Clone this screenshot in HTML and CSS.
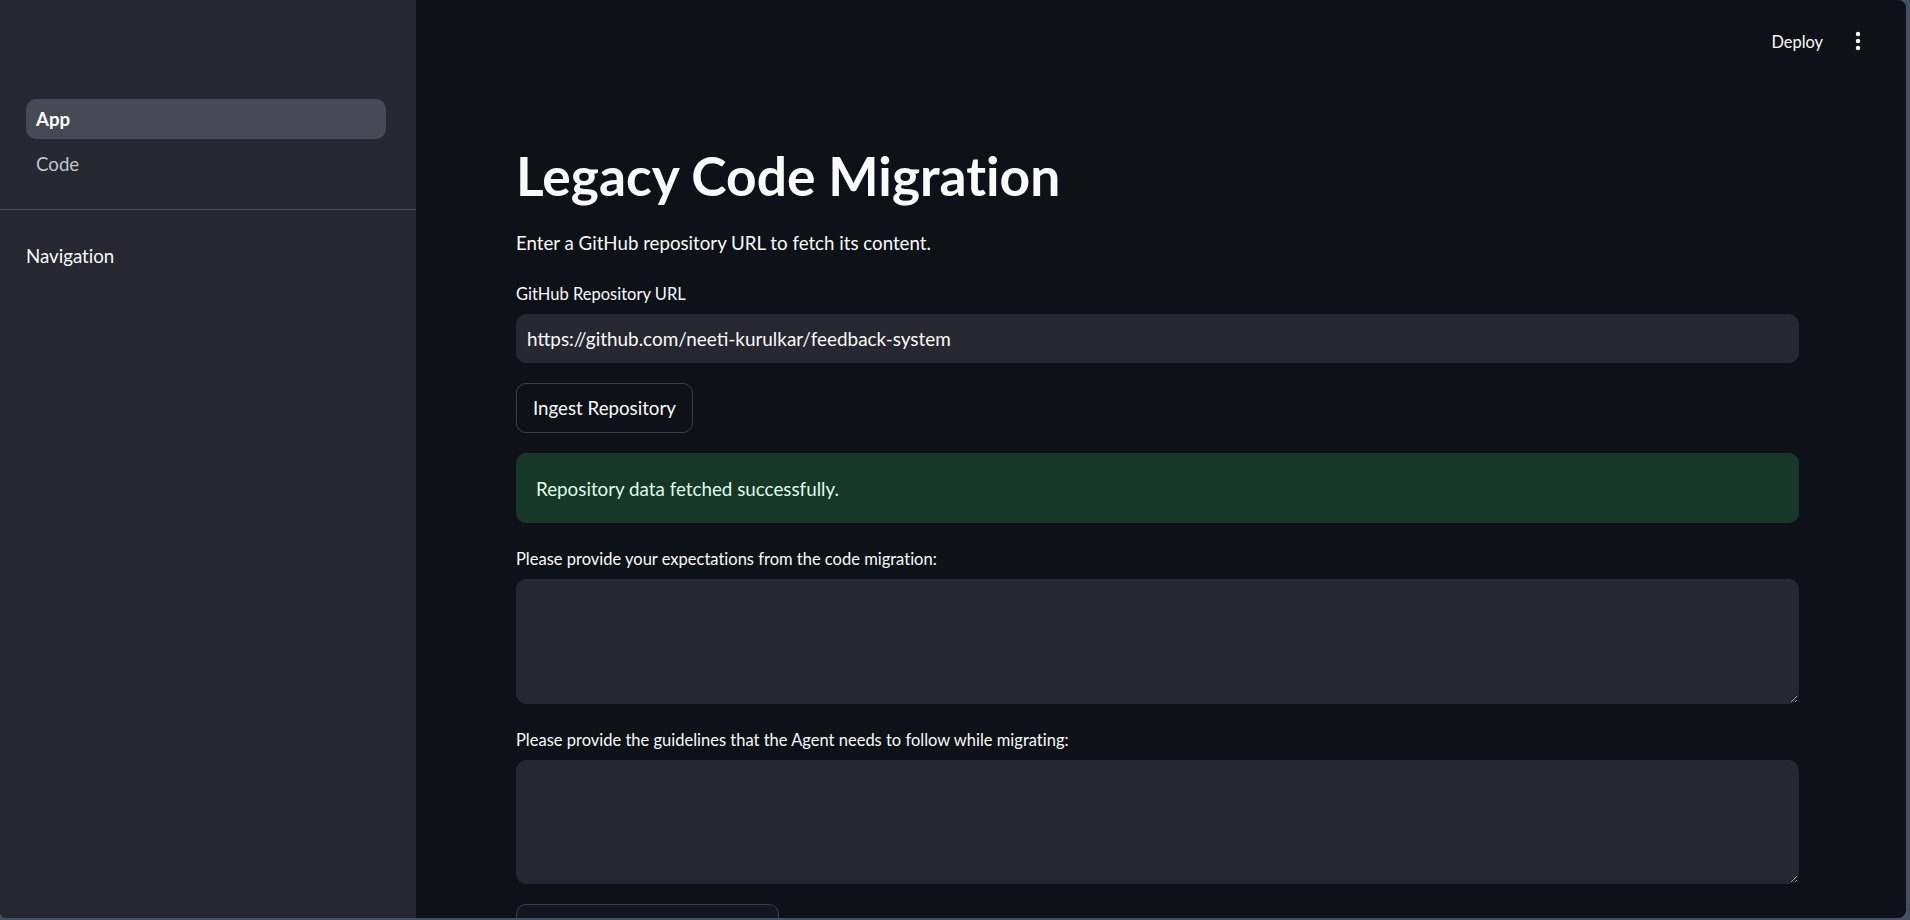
FILE: index.html
```html
<!DOCTYPE html>
<html lang="en">
<head>
<meta charset="utf-8">
<title>Legacy Code Migration</title>
<link rel="stylesheet" href="styles.css">
</head>
<body>
<div class="app">
  <aside class="sidebar">
    <nav class="nav-list">
      <a class="nav-item active">App</a>
      <a class="nav-item">Code</a>
    </nav>
    <hr class="divider">
    <div class="sidebar-title">Navigation</div>
  </aside>
  <main class="main">
    <header class="topbar">
      <span class="deploy">Deploy</span>
      <span class="kebab">
        <svg width="20" height="24" viewBox="0 0 20 24"><circle cx="10" cy="5" r="2.2"/><circle cx="10" cy="12" r="2.2"/><circle cx="10" cy="19" r="2.2"/></svg>
      </span>
    </header>
    <section class="content">
      <h1 class="title">Legacy Code Migration</h1>
      <p class="subtitle">Enter a GitHub repository URL to fetch its content.</p>
      <div class="field">
        <label class="label">GitHub Repository URL</label>
        <input class="text-input" type="text" value="https://github.com/neeti-kurulkar/feedback-system">
      </div>
      <div class="row"><button class="btn">Ingest Repository</button></div>
      <div class="alert-success">Repository data fetched successfully.</div>
      <div class="field">
        <label class="label">Please provide your expectations from the code migration:</label>
        <textarea class="text-area ta1"></textarea>
      </div>
      <div class="field">
        <label class="label">Please provide the guidelines that the Agent needs to follow while migrating:</label>
        <textarea class="text-area ta2"></textarea>
      </div>
      <div class="row"><button class="btn btn-wide"></button></div>
    </section>
  </main>
</div>
</body>
</html>
```
FILE: styles.css
```css
html, body {
  margin: 0;
  padding: 0;
  height: 100%;
  overflow: hidden;
}
body {
  background: #435064;
  font-family: Lato, "Liberation Sans", sans-serif;
  font-variant-ligatures: none;
  color: #fafafa;
  color-scheme: dark;
}
.app {
  display: flex;
  width: 1906px;
  height: 918px;
  border-radius: 0 8px 8px 6px;
  overflow: hidden;
  background: #0e1117;
}
/* Sidebar */
.sidebar {
  width: 416px;
  flex: none;
  background: #262730;
  padding-top: 99px;
  box-sizing: border-box;
}
.nav-list {
  display: flex;
  flex-direction: column;
  gap: 5px;
  padding: 0 30px 25px 26px;
}
.nav-item {
  display: flex;
  align-items: center;
  height: 40px;
  padding-left: 10px;
  border-radius: 10px;
  font-size: 18.7px;
  color: #bfc5d1;
}
.nav-item.active {
  background: #474954;
  color: #ffffff;
  font-weight: 700;
}
.divider {
  margin: 0;
  border: 0;
  border-top: 1px solid #4d4e57;
}
.sidebar-title {
  margin-top: 31px;
  padding-left: 26px;
  font-size: 18.7px;
  line-height: 30px;
  color: #fafafa;
}
/* Main */
.main {
  flex: 1;
  min-width: 0;
  display: flex;
  flex-direction: column;
}
.topbar {
  height: 82px;
  flex: none;
  display: flex;
  align-items: center;
  justify-content: flex-end;
  gap: 25px;
  padding-right: 38px;
}
.deploy {
  font-size: 16.4px;
  color: #fafafa;
}
.kebab {
  display: flex;
  width: 20px;
}
.kebab svg {
  fill: #fafafa;
}
.content {
  display: flex;
  flex-direction: column;
  gap: 20px;
  padding: 60px 107px 0 100px;
}
.title {
  margin: 0;
  font-size: 53.3px;
  font-weight: 700;
  line-height: 66px;
  color: #fafafa;
}
.subtitle {
  margin: 0;
  font-size: 18.7px;
  line-height: 30px;
}
.field {
  display: flex;
  flex-direction: column;
  gap: 9px;
  margin-top: 5px;
}
.label {
  font-size: 16.5px;
  line-height: 22px;
  color: #fafafa;
}
.text-input {
  height: 49px;
  box-sizing: border-box;
  border: 1px solid #262730;
  border-radius: 10px;
  background: #262730;
  padding: 0 10px;
  font-family: inherit;
  font-size: 18.9px;
  color: #fafafa;
  outline: none;
}
.row {
  display: flex;
}
.btn {
  height: 50px;
  box-sizing: border-box;
  padding: 0 16px;
  border: 1px solid #3e4048;
  border-radius: 10px;
  background: #0e1117;
  font-family: inherit;
  font-size: 18.7px;
  color: #fafafa;
}
.btn-wide {
  width: 263px;
  background: #131620;
}
.alert-success {
  height: 70px;
  box-sizing: border-box;
  display: flex;
  align-items: center;
  padding: 0 20px;
  border-radius: 10px;
  background: #173828;
  color: #dffde9;
  font-size: 18.8px;
}
.text-area {
  box-sizing: border-box;
  border: 1px solid #262730;
  border-radius: 10px;
  background: #262730;
  resize: vertical;
  padding: 10px;
  font-family: inherit;
  font-size: 18.7px;
  color: #fafafa;
  outline: none;
}
.ta1 { height: 125px; }
.ta2 { height: 124px; }
```
